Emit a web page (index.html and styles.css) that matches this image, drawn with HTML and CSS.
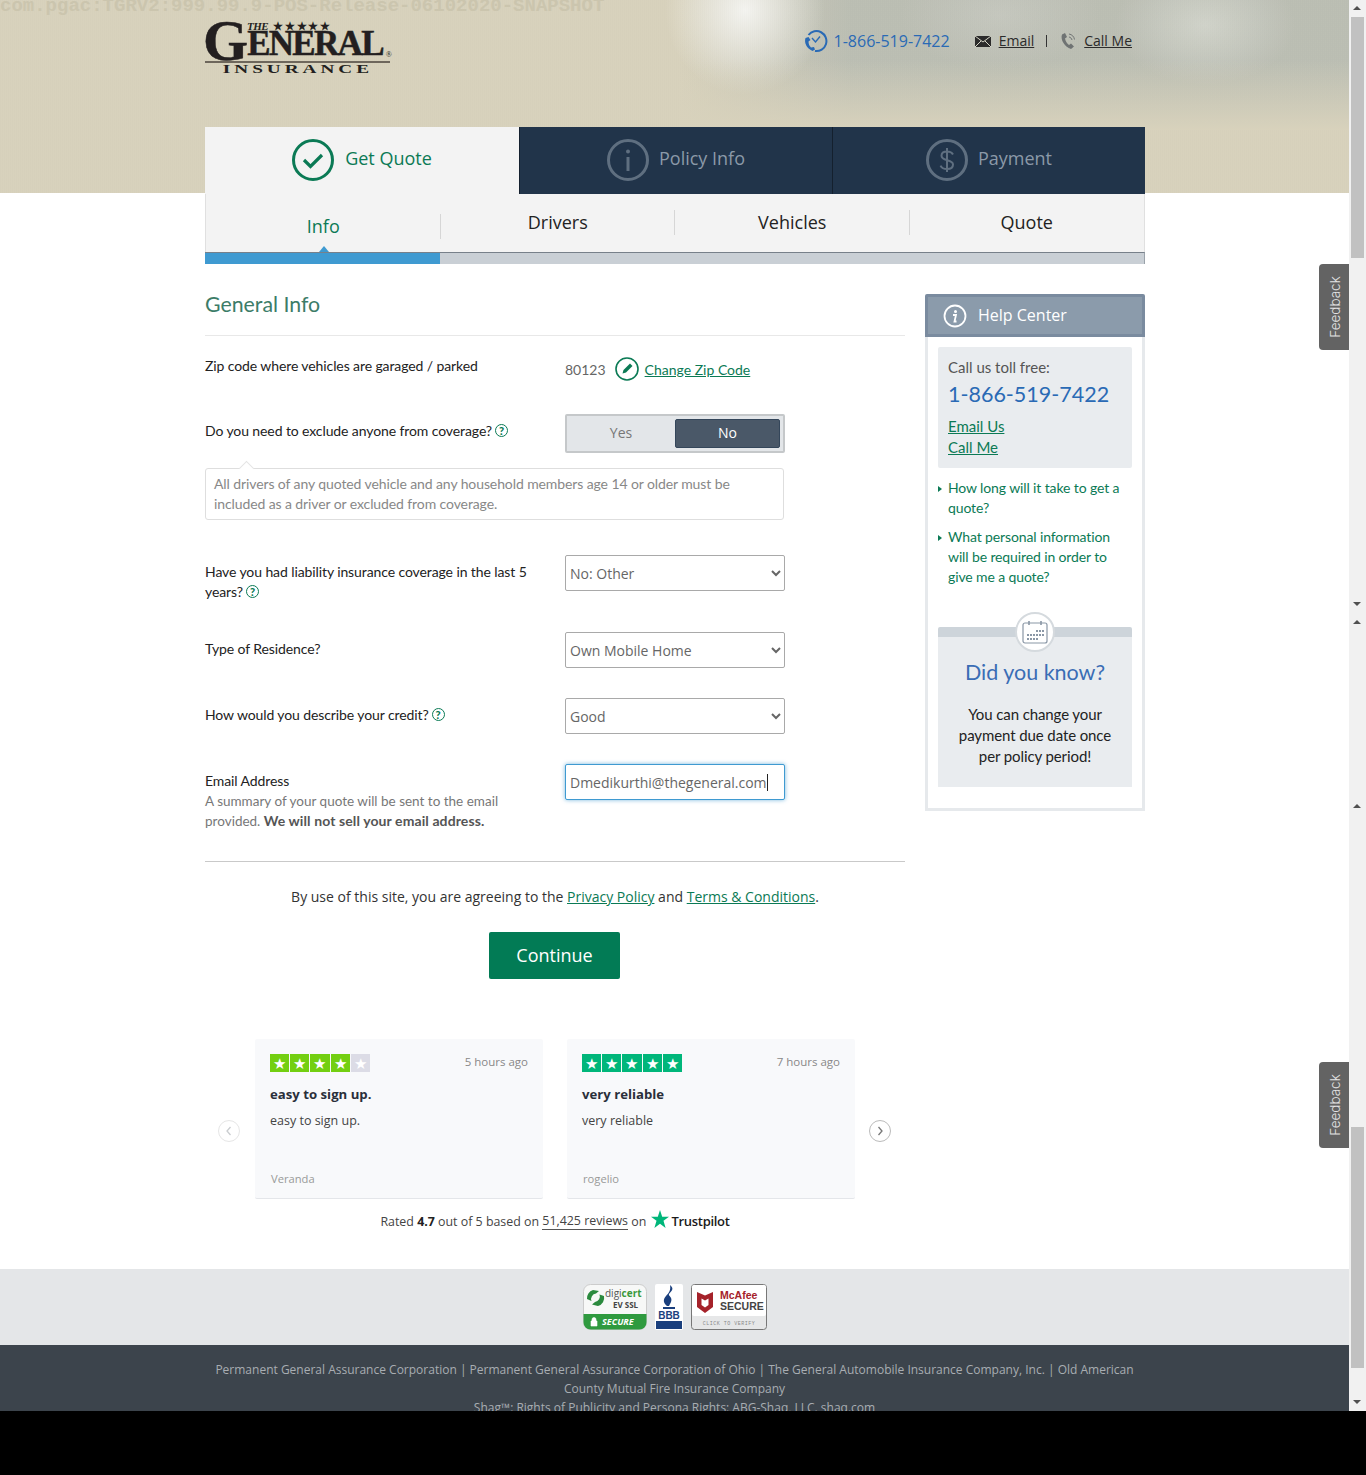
FILE: index.html
```html
<!DOCTYPE html>
<html lang="en">
<head>
    <meta charset="UTF-8">
    <meta name="viewport" content="width=device-width, initial-scale=1.0">
    <title>The General Insurance - General Info</title>
    <link rel="stylesheet" href="styles.css">
</head>
<body>
<div class="page">
    <div class="main">
        <header class="hero">
            <div class="build-tag">com.pgac:TGRV2:999.99.9-POS-Release-06102020-SNAPSHOT</div>
            <div class="wrap top-bar">
                <div class="logo">
                    <div class="logo-the"><i>THE</i> ★★★★★</div>
                    <div class="logo-name"><span class="logo-g">G</span><span class="logo-rest">ENERAL</span><span class="logo-reg">®</span></div>
                    <div class="logo-sub"><span>INSURANCE</span></div>
                </div>
                <div class="contact">
                    <svg class="contact-clock" width="24" height="24" viewBox="0 0 24 24" fill="none" stroke="#2a6ab5" stroke-width="2">
                        <path d="M4.500 6A10 10 0 1 1 11 22"/>
                        <path d="M8 9l3.500 4 4.500-5.500" stroke-width="1.400"/>
                        <path d="M1.500 9c-1.500 5 1 10 7 13l2.500-1.500-1-2.500-3 .5c-1.500-1.500-2.500-3.500-2.500-6l2-1.500-2-3z" fill="#2a6ab5" stroke="none"/>
                    </svg>
                    <span class="contact-phone">1-866-519-7422</span>
                    <svg class="contact-mail" width="16" height="11" viewBox="0 0 16 11">
                        <path d="M0 0h16v11H0z" fill="#2b2b2b"/>
                        <path d="M0 0l8 6 8-6M0 11l6-6M16 11l-6-6" stroke="#d5d4c6" fill="none"/>
                    </svg>
                    <a href="#" class="contact-link">Email</a>
                    <span class="contact-sep"></span>
                    <svg class="contact-call" width="18" height="18" viewBox="0 0 18 18" fill="none">
                        <path d="M2 2.500l3-1.500 2 4-2 1.500c.5 3 2 5 4 6.500l2-1.500 3 3-3 2.500C5 15 0 8 2 2.500z" fill="#6f7373"/>
                        <path d="M9 2c3 .5 5 2.500 5.500 5.500M9 5c1.500.3 2.500 1.200 3 3" stroke="#6f7373"/>
                    </svg>
                    <a href="#" class="contact-link">Call Me</a>
                </div>
            </div>
            <nav class="wrap steps">
                <div class="step step-active">
                    <svg width="42" height="42" viewBox="0 0 42 42" fill="none">
                        <circle cx="21" cy="21" r="19.500" stroke="#0b7a55" stroke-width="3"/>
                        <path d="M12 21l6.500 6.500L30 16" stroke="#0b7a55" stroke-width="3.200"/>
                    </svg>
                    <span>Get Quote</span>
                </div>
                <div class="step">
                    <svg width="42" height="42" viewBox="0 0 42 42" fill="none">
                        <circle cx="21" cy="21" r="19.500" stroke="#5f6f80" stroke-width="3"/>
                        <circle cx="21" cy="12.500" r="2" fill="#5f6f80"/>
                        <path d="M21 18v14" stroke="#5f6f80" stroke-width="3"/>
                    </svg>
                    <span>Policy Info</span>
                </div>
                <div class="step">
                    <svg width="42" height="42" viewBox="0 0 42 42" fill="none">
                        <circle cx="21" cy="21" r="19.500" stroke="#5f6f80" stroke-width="3"/>
                        <path d="M27 15.500c-1-2-3-3-6-3s-5.500 1.500-5.500 4.300c0 6 11.500 3 11.500 8.800 0 3-2.500 4.500-6 4.500s-5.500-1.300-6.500-3.500M21 9v24" stroke="#5f6f80" stroke-width="2"/>
                    </svg>
                    <span>Payment</span>
                </div>
            </nav>
        </header>

        <div class="wrap">
            <div class="subnav">
                <div class="subnav-item subnav-current">Info</div>
                <div class="subnav-item">Drivers</div>
                <div class="subnav-item">Vehicles</div>
                <div class="subnav-item">Quote</div>
            </div>
            <div class="progress"><div class="progress-fill"></div></div>
        </div>

        <div class="wrap content">
            <section class="form-col">
                <h2 class="form-title">General Info</h2>

                <div class="row row-zip">
                    <div class="row-label">Zip code where vehicles are garaged / parked</div>
                    <div class="zip-value">
                        <span class="zip-num">80123</span>
                        <svg width="24" height="24" viewBox="0 0 24 24" fill="none">
                            <circle cx="12" cy="12" r="11" stroke="#0b7a55" stroke-width="1.600"/>
                            <path d="M7.500 16.500l1-3.500 6.500-6.500 2.500 2.500-6.500 6.500z" fill="#0b7a55"/>
                        </svg>
                        <a href="#" class="green-link">Change Zip Code</a>
                    </div>
                </div>

                <div class="row row-exclude">
                    <div class="row-label">Do you need to exclude anyone from coverage?<span class="help">?</span></div>
                    <div class="toggle">
                        <div class="toggle-opt">Yes</div>
                        <div class="toggle-opt toggle-on">No</div>
                    </div>
                </div>
                <div class="hint">All drivers of any quoted vehicle and any household members age 14 or older must be included as a driver or excluded from coverage.</div>

                <div class="row row-liability">
                    <div class="row-label">Have you had liability insurance coverage in the last 5 years?<span class="help">?</span></div>
                    <select class="field"><option>No: Other</option></select>
                </div>
                <div class="row row-residence">
                    <div class="row-label">Type of Residence?</div>
                    <select class="field"><option>Own Mobile Home</option></select>
                </div>
                <div class="row row-credit">
                    <div class="row-label">How would you describe your credit?<span class="help">?</span></div>
                    <select class="field"><option>Good</option></select>
                </div>
                <div class="row row-email">
                    <div class="row-label">Email Address
                        <p class="row-note">A summary of your quote will be sent to the email provided. <b>We will not sell your email address.</b></p>
                    </div>
                    <div class="field field-focus">Dmedikurthi@thegeneral.com<span class="caret"></span></div>
                </div>

                <div class="terms">By use of this site, you are agreeing to the <a href="#" class="green-link">Privacy Policy</a> and <a href="#" class="green-link">Terms &amp; Conditions</a>.</div>
                <div class="continue-row"><button class="continue-btn">Continue</button></div>

                <div class="reviews">
                    <div class="rev-arrow rev-arrow-off"><svg width="8" height="10" viewBox="0 0 8 10" fill="none"><path d="M5.500 1L2 5l3.500 4" stroke="#c9cccf" stroke-width="1.300"/></svg></div>
                    <div class="rev-card">
                        <div class="rev-top">
                            <div class="stars stars-four">
                                <span>★</span><span>★</span><span>★</span><span>★</span><span class="star-off">★</span>
                            </div>
                            <div class="rev-time">5 hours ago</div>
                        </div>
                        <div class="rev-title">easy to sign up.</div>
                        <div class="rev-body">easy to sign up.</div>
                        <div class="rev-name">Veranda</div>
                    </div>
                    <div class="rev-card">
                        <div class="rev-top">
                            <div class="stars stars-five">
                                <span>★</span><span>★</span><span>★</span><span>★</span><span>★</span>
                            </div>
                            <div class="rev-time">7 hours ago</div>
                        </div>
                        <div class="rev-title">very reliable</div>
                        <div class="rev-body">very reliable</div>
                        <div class="rev-name">rogelio</div>
                    </div>
                    <div class="rev-arrow rev-arrow-next"><svg width="8" height="10" viewBox="0 0 8 10" fill="none"><path d="M2.500 1L6 5 2.500 9" stroke="#777" stroke-width="1.300"/></svg></div>
                </div>
                <div class="rated">Rated <b>4.7</b> out of 5 based on <a href="#">51,425 reviews</a> on <svg class="tp-star" width="18" height="18" viewBox="0 0 18 18"><path d="M9 0l2.200 6.800H18l-5.500 4L14.600 18 9 13.700 3.400 18l2.100-7.200L0 6.800h6.800z" fill="#00b67a"/></svg><span class="tp-name">Trustpilot</span></div>
            </section>

            <aside class="help-col">
                <div class="help-head">
                    <svg width="24" height="24" viewBox="0 0 24 24" fill="none">
                        <circle cx="12" cy="12" r="10.500" stroke="#fff" stroke-width="1.800"/>
                        <circle cx="12.500" cy="7.500" r="1.500" fill="#fff"/>
                        <path d="M10 11h3l-1.500 6.500h2" stroke="#fff" stroke-width="1.800"/>
                    </svg>
                    <span>Help Center</span>
                </div>
                <div class="help-body">
                    <div class="call-box">
                        <div class="call-label">Call us toll free:</div>
                        <div class="call-num">1-866-519-7422</div>
                        <a href="#" class="green-link">Email Us</a>
                        <a href="#" class="green-link">Call Me</a>
                    </div>
                    <ul class="faq">
                        <li>How long will it take to get a quote?</li>
                        <li>What personal information will be required in order to give me a quote?</li>
                    </ul>
                    <div class="know">
                        <div class="know-icon">
                            <svg width="26" height="24" viewBox="0 0 26 24" fill="none">
                                <rect x="1" y="3" width="24" height="20" rx="2" stroke="#8a97a6" stroke-width="1.200"/>
                                <path d="M7 1v4M19 1v4" stroke="#8a97a6" stroke-width="1.600"/>
                                <path d="M14 10h2v2h-2zM17 10h2v2h-2zM20 10h2v2h-2zM5 14h2v2H5zM8 14h2v2H8zM11 14h2v2h-2zM14 14h2v2h-2zM17 14h2v2h-2zM20 14h2v2h-2zM5 18h2v2H5zM8 18h2v2H8zM11 18h2v2h-2zM14 18h2v2h-2z" fill="#8a97a6"/>
                            </svg>
                        </div>
                        <h3 class="know-title">Did you know?</h3>
                        <p class="know-text">You can change your payment due date once per policy period!</p>
                    </div>
                </div>
            </aside>
        </div>

        <div class="seals">
            <svg class="seal" width="64" height="46" viewBox="0 0 64 46">
                <rect x="0.500" y="0.500" width="63" height="45" rx="7" fill="#f7f8f7" stroke="#ccc"/>
                <path d="M0.500 30h63v8.500a7 7 0 0 1-7 7h-49a7 7 0 0 1-7-7z" fill="#2f9a3f"/>
                <path d="M4 15a8.500 8.500 0 0 1 6-9l6 1-3 2.500a5.500 5.500 0 0 0-4.500 7.500z" fill="#2b8a3e"/>
                <path d="M21 12a8.500 8.500 0 0 1-6 10l-6-1.500 3-2.500a5.500 5.500 0 0 0 4.500-7.500z" fill="#2b8a3e"/>
                <text x="22" y="13" class="seal-digi">digi<tspan fill="#3a9a3d" font-weight="700">cert</tspan></text>
                <text x="30" y="24" class="seal-ev">EV SSL</text>
                <path d="M8 37h6v5H8zM9 37v-1.500a2 2 0 0 1 4 0V37" fill="#fff" stroke="#fff" stroke-width="0.600"/>
                <text x="19" y="41" class="seal-secure">SECURE</text>
            </svg>
            <svg class="seal" width="28" height="46" viewBox="0 0 28 46">
                <rect width="28" height="46" rx="2" fill="#fff"/>
                <path d="M15 1c5 4 1 6-1 9-1 2 4 3 2 8l-2 4h-2c-4-3-4-7-1-10 3-3 5-6 4-11z" fill="#1a3f7d"/>
                <rect x="8" y="23" width="12" height="2" fill="#1a3f7d"/>
                <text x="14" y="35" class="seal-bbb">BBB</text>
                <rect x="1" y="37" width="26" height="8" fill="#1a3f7d"/>
            </svg>
            <svg class="seal" width="76" height="46" viewBox="0 0 76 46">
                <rect x="0.500" y="0.500" width="75" height="45" rx="3" fill="#e6e7e8" stroke="#777"/>
                <rect x="1" y="1" width="74" height="31" rx="2" fill="#fff"/>
                <path d="M6 8l8 3.500L22 8v15l-8 6-8-6z" fill="#a5222a"/>
                <path d="M10.500 14.500l3.500 2 3.500-2v6.500l-3.500 2.500-3.500-2.500z" fill="#fff"/>
                <text x="29" y="15" class="seal-mc">McAfee</text>
                <text x="29" y="26" class="seal-msec">SECURE</text>
                <text x="38" y="41" class="seal-click">CLICK TO VERIFY</text>
            </svg>
        </div>
        <footer class="footer">
            <p>Permanent General Assurance Corporation | Permanent General Assurance Corporation of Ohio | The General Automobile Insurance Company, Inc. | Old American County Mutual Fire Insurance Company</p>
            <p>Shag™: Rights of Publicity and Persona Rights: ABG-Shaq, LLC. shaq.com</p>
        </footer>

        <div class="feedback feedback-one"><span>Feedback</span></div>
        <div class="feedback feedback-two"><span>Feedback</span></div>
    </div>

    <div class="scrollbar">
        <div class="sb-arrow sb-up"></div>
        <div class="sb-thumb sb-thumb-top"></div>
        <div class="sb-arrow sb-down sb-mid-down"></div>
        <div class="sb-arrow sb-up sb-mid-up"></div>
        <div class="sb-arrow sb-up sb-mid-up2"></div>
        <div class="sb-thumb sb-thumb-bottom"></div>
        <div class="sb-arrow sb-down sb-end"></div>
    </div>
</div>
</body>
</html>
```

FILE: styles.css
```css
html, body {
    margin: 0;
    padding: 0;
    background-color: #000;
}

body {
    font-family: 'Lato', sans-serif;
    font-size: 14px;
    color: #222;
    height: 1475px;
    overflow: hidden;
}

a {
    color: inherit;
}

.page {
    display: flex;
    height: 1411px;
    overflow: hidden;
    background-color: #fff;
}

.main {
    position: relative;
    width: 1349px;
    flex: none;
}

.wrap {
    width: 940px;
    margin-left: 205px;
}

/* header */
.hero {
    position: relative;
    height: 193px;
    background-color: #d8d2bc;
    background-image:
        repeating-linear-gradient(90deg, rgba(0, 0, 0, 0.008) 0, rgba(0, 0, 0, 0.008) 1px, rgba(255, 255, 255, 0.008) 1px, rgba(255, 255, 255, 0.008) 2px),
        radial-gradient(ellipse 80px 85px at 745px 10px, rgba(246, 246, 243, 0.95), rgba(246, 246, 243, 0) 100%),
        radial-gradient(ellipse 90px 60px at 1205px 25px, rgba(218, 220, 212, 0.7), rgba(218, 220, 212, 0) 100%),
        radial-gradient(ellipse 100px 55px at 1000px 15px, rgba(208, 209, 201, 0.5), rgba(208, 209, 201, 0) 100%),
        linear-gradient(90deg, rgba(184, 188, 178, 0) 680px, rgba(184, 188, 178, 0.9) 850px);
    background-size: auto, auto, auto, auto, 100% 130px;
    background-repeat: repeat, no-repeat, no-repeat, no-repeat, no-repeat;
}

/* fades the grey band at the top of the photo into the beige */
.hero::before {
    content: "";
    position: absolute;
    left: 680px;
    right: 0;
    top: 60px;
    height: 70px;
    background: linear-gradient(rgba(216, 210, 188, 0), #d8d2bc);
}

.build-tag {
    position: absolute;
    left: 0;
    top: -3px;
    font-family: 'Liberation Mono', monospace;
    font-weight: 700;
    font-size: 19px;
    line-height: 19px;
    color: #cbc5ae;
    white-space: nowrap;
}

.top-bar {
    position: relative;
    display: flex;
    justify-content: space-between;
    height: 127px;
}

.logo {
    position: relative;
    width: 192px;
    padding-top: 20px;
    color: #231f20;
    font-family: 'Liberation Serif', serif;
    font-weight: 700;
}

.logo-the {
    position: absolute;
    left: 42px;
    top: 20px;
    font-size: 11px;
    line-height: 12px;
    letter-spacing: 1.900px;
    white-space: nowrap;
}

.logo-the i {
    letter-spacing: -0.500px;
}

.logo-name {
    display: flex;
    align-items: flex-end;
    height: 41px;
    border-bottom: 2px solid #6e675c;
    width: 185px;
    white-space: nowrap;
}

.logo-g {
    margin-left: -2px;
    font-size: 58px;
    line-height: 41px;
    letter-spacing: -1px;
    -webkit-text-stroke: 0.500px #231f20;
}

.logo-rest {
    font-size: 35px;
    line-height: 36px;
    letter-spacing: -1.700px;
    margin-bottom: -1px;
    -webkit-text-stroke: 0.500px #231f20;
}

.logo-reg {
    font-size: 8px;
    line-height: 12px;
    margin-left: 3px;
    font-weight: 400;
}

.logo-sub {
    text-align: center;
    width: 185px;
    font-size: 12px;
    line-height: 11px;
    margin-top: 1px;
}

.logo-sub span {
    display: inline-block;
    letter-spacing: 2.500px;
    transform: scaleX(1.600);
}

.contact {
    position: relative;
    display: flex;
    align-items: center;
    height: 24px;
    margin-top: 29px;
    margin-right: 13px;
    font-family: 'Open Sans', sans-serif;
    font-size: 14px;
}

.contact-clock {
    margin-right: 6px;
}

.contact-phone {
    color: #2a6ab5;
    font-size: 16px;
    margin-right: 25px;
}

.contact-mail {
    margin-right: 8px;
}

.contact-link {
    color: #2b2b2b;
    margin-bottom: 2px;
}

.contact-sep {
    width: 1px;
    height: 12px;
    background-color: #333;
    margin: 0 13px 0 12px;
}

.contact-call {
    margin-right: 6px;
}

.steps {
    position: relative;
    display: flex;
    height: 67px;
}

.step {
    display: flex;
    flex: 1;
    align-items: center;
    justify-content: center;
    gap: 10px;
    background-color: #21344a;
    color: #8b99a8;
    font-family: 'Open Sans', sans-serif;
    font-size: 18px;
    padding-bottom: 2px;
    box-sizing: border-box;
    border-left: 1px solid #14202e;
}

.step span {
    margin-top: -4px;
}

.step-active {
    flex: none;
    width: 314px;
    gap: 11px;
    background-color: #f3f3f3;
    color: #0b7a55;
    border-left: 0;
}

/* sub navigation */
.subnav {
    display: flex;
    height: 58px;
    margin-top: 1px;
    background-color: #f3f3f3;
    box-sizing: border-box;
    border-left: 1px solid #e0e0e0;
    border-right: 1px solid #e0e0e0;
}

.subnav-item {
    position: relative;
    flex: 1;
    text-align: center;
    line-height: 56px;
    font-family: 'Open Sans', sans-serif;
    font-size: 18px;
    color: #222;
}

.subnav-item + .subnav-item::before {
    content: "";
    position: absolute;
    left: -1px;
    top: 16px;
    height: 25px;
    border-left: 1px solid #d6d6d6;
}

.subnav-current + .subnav-item::before {
    top: 20px;
}

.subnav-current {
    color: #0b7a55;
    line-height: 64px;
}

.subnav-current::after {
    content: "";
    position: absolute;
    left: 113px;
    bottom: 0;
    border: 5px solid transparent;
    border-top: 0;
    border-bottom: 6px solid #3f9ad1;
}

.progress {
    height: 12px;
    box-sizing: border-box;
    background-color: #c9cfd5;
    border-top: 1px solid #77808a;
    border-right: 1px solid #9aa2aa;
}

.progress-fill {
    width: 235px;
    height: 11px;
    background-color: #3f9ad1;
}

/* main columns */
.content {
    display: flex;
    justify-content: space-between;
    height: 1005px;
}

.form-col {
    width: 700px;
}

.form-title {
    margin: 27px 0 0;
    height: 45px;
    box-sizing: border-box;
    border-bottom: 1px solid #e8e8e8;
    font-size: 21.300px;
    line-height: 26px;
    font-weight: 400;
    color: #3c7c68;
}

.row {
    display: flex;
    justify-content: space-between;
    width: 580px;
}

.row-label {
    width: 330px;
    line-height: 20px;
    letter-spacing: -0.100px;
    color: #222;
}

.row-zip {
    margin-top: 20px;
    height: 35px;
}

.zip-value {
    display: flex;
    align-items: center;
    width: 220px;
    height: 26px;
    color: #555;
}

.zip-num {
    margin-right: 9px;
    color: #666;
}

.zip-value svg {
    margin-right: 6px;
}

.green-link {
    color: #0b7a55;
}

.row-exclude {
    margin-top: 23px;
}

.row-exclude .row-label {
    padding-top: 7px;
}

.help {
    display: inline-block;
    width: 11px;
    height: 11px;
    margin-left: 3px;
    border: 1.600px solid #0b7a55;
    border-radius: 50%;
    color: #0b7a55;
    font-size: 11px;
    font-weight: 900;
    letter-spacing: 0;
    line-height: 11px;
    text-align: center;
    vertical-align: 1px;
}

.toggle {
    display: flex;
    width: 220px;
    height: 39px;
    box-sizing: border-box;
    padding: 3px 3px 3px 0;
    background-color: #e3e6e9;
    border: 2px solid #c5c8ca;
    border-radius: 2px;
    font-family: 'Open Sans', sans-serif;
    font-size: 14px;
}

.toggle-opt {
    flex: 1;
    text-align: center;
    line-height: 28px;
    color: #777;
}

.toggle-on {
    flex: none;
    width: 105px;
    box-sizing: border-box;
    background-color: #4a5868;
    border: 1px solid #34465a;
    border-radius: 2px;
    color: #fff;
    line-height: 26px;
}

.hint {
    position: relative;
    width: 579px;
    height: 52px;
    margin-top: 15px;
    box-sizing: border-box;
    padding: 5px 30px 0 8px;
    border: 1px solid #dedede;
    border-radius: 3px;
    line-height: 20px;
    letter-spacing: -0.100px;
    color: #888;
}

.hint::before {
    content: "";
    position: absolute;
    left: 35px;
    top: -6px;
    width: 10px;
    height: 10px;
    background-color: #fff;
    border-left: 1px solid #e4e4e4;
    border-top: 1px solid #e4e4e4;
    transform: rotate(45deg);
}

.field {
    width: 220px;
    height: 36px;
    box-sizing: border-box;
    background-color: #fff;
    border: 1px solid #a9a9a9;
    border-radius: 2px;
    padding: 0;
    font-family: 'Open Sans', sans-serif;
    font-size: 14px;
    color: #666;
}

.row-liability {
    margin-top: 35px;
    height: 77px;
}

.row-liability .row-label,
.row-residence .row-label,
.row-credit .row-label,
.row-email .row-label {
    padding-top: 7px;
}

.row-residence,
.row-credit {
    height: 66px;
}

.row-email {
    height: 97px;
    border-bottom: 1px solid #c9c9c9;
    width: 700px;
}

.row-email .field {
    margin-right: 120px;
}

.row-note {
    margin: 0;
    font-size: 13.500px;
    letter-spacing: 0;
    color: #777;
}

.row-note b {
    font-size: 14px;
    letter-spacing: 0.100px;
    color: #555;
}

.field-focus {
    display: flex;
    align-items: center;
    padding-left: 4px;
    border: 1px solid #3f9ad1;
    box-shadow: 0 0 4px rgba(63, 154, 209, 0.7);
}

.caret {
    width: 1px;
    height: 17px;
    background-color: #222;
}

.terms {
    margin-top: 25px;
    text-align: center;
    font-family: 'Open Sans', sans-serif;
    font-size: 14px;
    line-height: 20px;
    color: #333;
}

.continue-row {
    display: flex;
    justify-content: center;
    margin-top: 25px;
    padding-right: 1px;
}

.continue-btn {
    width: 131px;
    height: 47px;
    padding: 0 0 2px;
    background-color: #027b55;
    color: #fff;
    border: none;
    border-radius: 2px;
    font-family: 'Open Sans', sans-serif;
    font-size: 18px;
}

/* reviews */
.reviews {
    display: flex;
    align-items: flex-start;
    gap: 24px;
    margin-top: 60px;
    padding-left: 13px;
    font-family: 'Open Sans', sans-serif;
}

.rev-arrow {
    display: flex;
    align-items: center;
    justify-content: center;
    width: 22px;
    height: 22px;
    margin-top: 81px;
    box-sizing: border-box;
    border: 1px solid #bbb;
    border-radius: 50%;
    background-color: #fff;
    flex: none;
}

.rev-arrow-off {
    border-color: #e6e6e6;
    margin-right: -9px;
}

.rev-arrow-next {
    margin-left: -10px;
}

.rev-card {
    display: flex;
    flex-direction: column;
    width: 288px;
    height: 160px;
    box-sizing: border-box;
    padding: 15px 15px 0;
    background-color: #f8f9fb;
    border-bottom: 1px solid #e4e6ea;
    border-radius: 2px;
}

.rev-top {
    display: flex;
    justify-content: space-between;
    align-items: flex-start;
    height: 18px;
}

.stars {
    display: flex;
    gap: 1px;
}

.stars span {
    width: 19.200px;
    height: 18px;
    color: #fff;
    font-size: 15px;
    line-height: 18px;
    text-align: center;
}

.stars-four span {
    background-color: #73cf11;
}

.stars-four .star-off {
    background-color: #dcdce6;
}

.stars-five span {
    background-color: #00b67a;
}

.rev-time {
    font-size: 11.500px;
    line-height: 16px;
    color: #888;
}

.rev-title {
    margin-top: 13px;
    font-size: 13.200px;
    line-height: 18px;
    font-weight: 700;
    color: #2a2f3a;
}

.rev-body {
    margin-top: 9px;
    font-size: 12.500px;
    line-height: 17px;
    color: #444;
}

.rev-name {
    margin-top: auto;
    margin-bottom: 11px;
    padding-left: 1px;
    font-size: 11.200px;
    line-height: 17px;
    color: #999;
}

.rated {
    display: flex;
    align-items: center;
    justify-content: center;
    height: 24px;
    margin-top: 10px;
    font-family: 'Open Sans', sans-serif;
    font-size: 12.400px;
    color: #444;
    white-space: pre;
}

.rated b {
    color: #222;
}

.rated a {
    text-decoration: none;
    border-bottom: 1px solid #555;
}

.tp-star {
    margin: -4px 2px 0 2px;
}

.tp-name {
    color: #1b1b1b;
    font-weight: 600;
    font-size: 13px;
    letter-spacing: -0.300px;
}

/* help column */
.help-col {
    width: 220px;
    margin-top: 30px;
}

.help-head {
    display: flex;
    align-items: center;
    gap: 11px;
    height: 43px;
    box-sizing: border-box;
    padding-left: 15px;
    background-color: #8b9bab;
    border: 3px solid #7a8b9f;
    border-radius: 2px 2px 0 0;
    color: #fff;
    font-family: 'Open Sans', sans-serif;
    font-size: 16px;
}

.help-head span {
    margin-top: -2px;
}

.help-body {
    height: 474px;
    box-sizing: border-box;
    padding: 10px 10px 0;
    border: 3px solid #e6e9ec;
    border-top: 0;
}

.call-box {
    height: 121px;
    box-sizing: border-box;
    padding: 10px 10px 0;
    background-color: #e9ecef;
    border-radius: 2px;
    font-size: 15px;
    line-height: 21px;
}

.call-box a {
    display: block;
}

.call-label {
    color: #555;
}

.call-num {
    color: #2a6ab5;
    font-size: 21.500px;
    line-height: 26px;
    margin: 3px 0 9px;
}

.faq {
    list-style: none;
    margin: 10px 0 0;
    padding: 0 0 0 10px;
    color: #0b7a55;
    line-height: 20px;
    letter-spacing: -0.120px;
}

.faq li {
    position: relative;
    margin-bottom: 9px;
}

.faq li::before {
    content: "";
    position: absolute;
    left: -10px;
    top: 8px;
    border: 3px solid transparent;
    border-left: 4px solid #0b7a55;
    border-right: 0;
}

.know {
    position: relative;
    height: 160px;
    margin-top: 40px;
    box-sizing: border-box;
    padding-top: 31px;
    background-color: #e9ecef;
    border-top: 10px solid #cdd4da;
    border-radius: 2px 2px 0 0;
    text-align: center;
}

.know-icon {
    position: absolute;
    left: 77px;
    top: -25px;
    display: flex;
    align-items: center;
    justify-content: center;
    width: 40px;
    height: 40px;
    box-sizing: border-box;
    background-color: #fff;
    border: 2px solid #d5dade;
    border-radius: 50%;
}

.know-title {
    margin: -10px 0 0;
    color: #3a6db5;
    font-size: 21.500px;
    line-height: 28px;
    font-weight: 400;
}

.know-text {
    margin: 18px 15px 0;
    font-size: 15px;
    line-height: 21px;
    letter-spacing: -0.100px;
    color: #222;
}

/* seals + footer */
.seals {
    display: flex;
    justify-content: center;
    align-items: center;
    gap: 8px;
    height: 76px;
    background-color: #e4e6e8;
    padding: 0;
    box-sizing: border-box;
}

.seal-digi {
    font: 400 10px 'Open Sans', sans-serif;
    fill: #555;
}

.seal-ev {
    font: 700 8px 'Open Sans', sans-serif;
    fill: #444;
}

.seal-secure {
    font: italic 700 9px 'Open Sans', sans-serif;
    fill: #fff;
}

.seal-bbb {
    font: 700 10px 'Liberation Sans', sans-serif;
    fill: #1a3f7d;
    text-anchor: middle;
}

.seal-mc {
    font: 700 10.500px 'Liberation Sans', sans-serif;
    fill: #a5222a;
}

.seal-msec {
    font: 700 10.500px 'Liberation Sans', sans-serif;
    fill: #444;
}

.seal-click {
    font: 400 5px 'Liberation Mono', monospace;
    fill: #888;
    text-anchor: middle;
    letter-spacing: 0.500px;
}

.footer {
    height: 66px;
    overflow: hidden;
    box-sizing: border-box;
    padding: 15px 205px 0;
    background-color: #3c444c;
    color: #a8adb2;
    font-family: 'Open Sans', sans-serif;
    font-size: 12px;
    line-height: 19px;
    text-align: center;
}

.footer p {
    margin: 0;
}

.feedback {
    position: absolute;
    right: 0;
    width: 30px;
    height: 86px;
    box-sizing: border-box;
    padding-left: 2px;
    display: flex;
    align-items: center;
    justify-content: center;
    background-color: #636363;
    border-radius: 4px 0 0 4px;
    color: #e4e4e4;
    font-family: 'Inter', sans-serif;
    font-weight: 300;
    font-size: 13.500px;
}

.feedback span {
    transform: rotate(-90deg);
    white-space: nowrap;
}

.feedback-one {
    top: 264px;
}

.feedback-two {
    top: 1062px;
}

/* fake scrollbar, the capture was stitched */
.scrollbar {
    position: relative;
    width: 17px;
    flex: none;
    background-color: #f1f1f1;
}

.sb-thumb {
    position: absolute;
    left: 2px;
    width: 13px;
    height: 241px;
    background-color: #c1c1c1;
}

.sb-thumb-top {
    top: 17px;
}

.sb-thumb-bottom {
    top: 1127px;
}

.sb-arrow {
    position: absolute;
    left: 4px;
    border: 4px solid transparent;
    border-top: 0;
    border-bottom: 4px solid #505050;
}

.sb-up {
    top: 6px;
}

.sb-down {
    border-bottom: 0;
    border-top: 4px solid #505050;
}

.sb-mid-down {
    top: 602px;
}

.sb-mid-up {
    top: 620px;
}

.sb-mid-up2 {
    top: 804px;
}

.sb-end {
    top: 1400px;
}
```
